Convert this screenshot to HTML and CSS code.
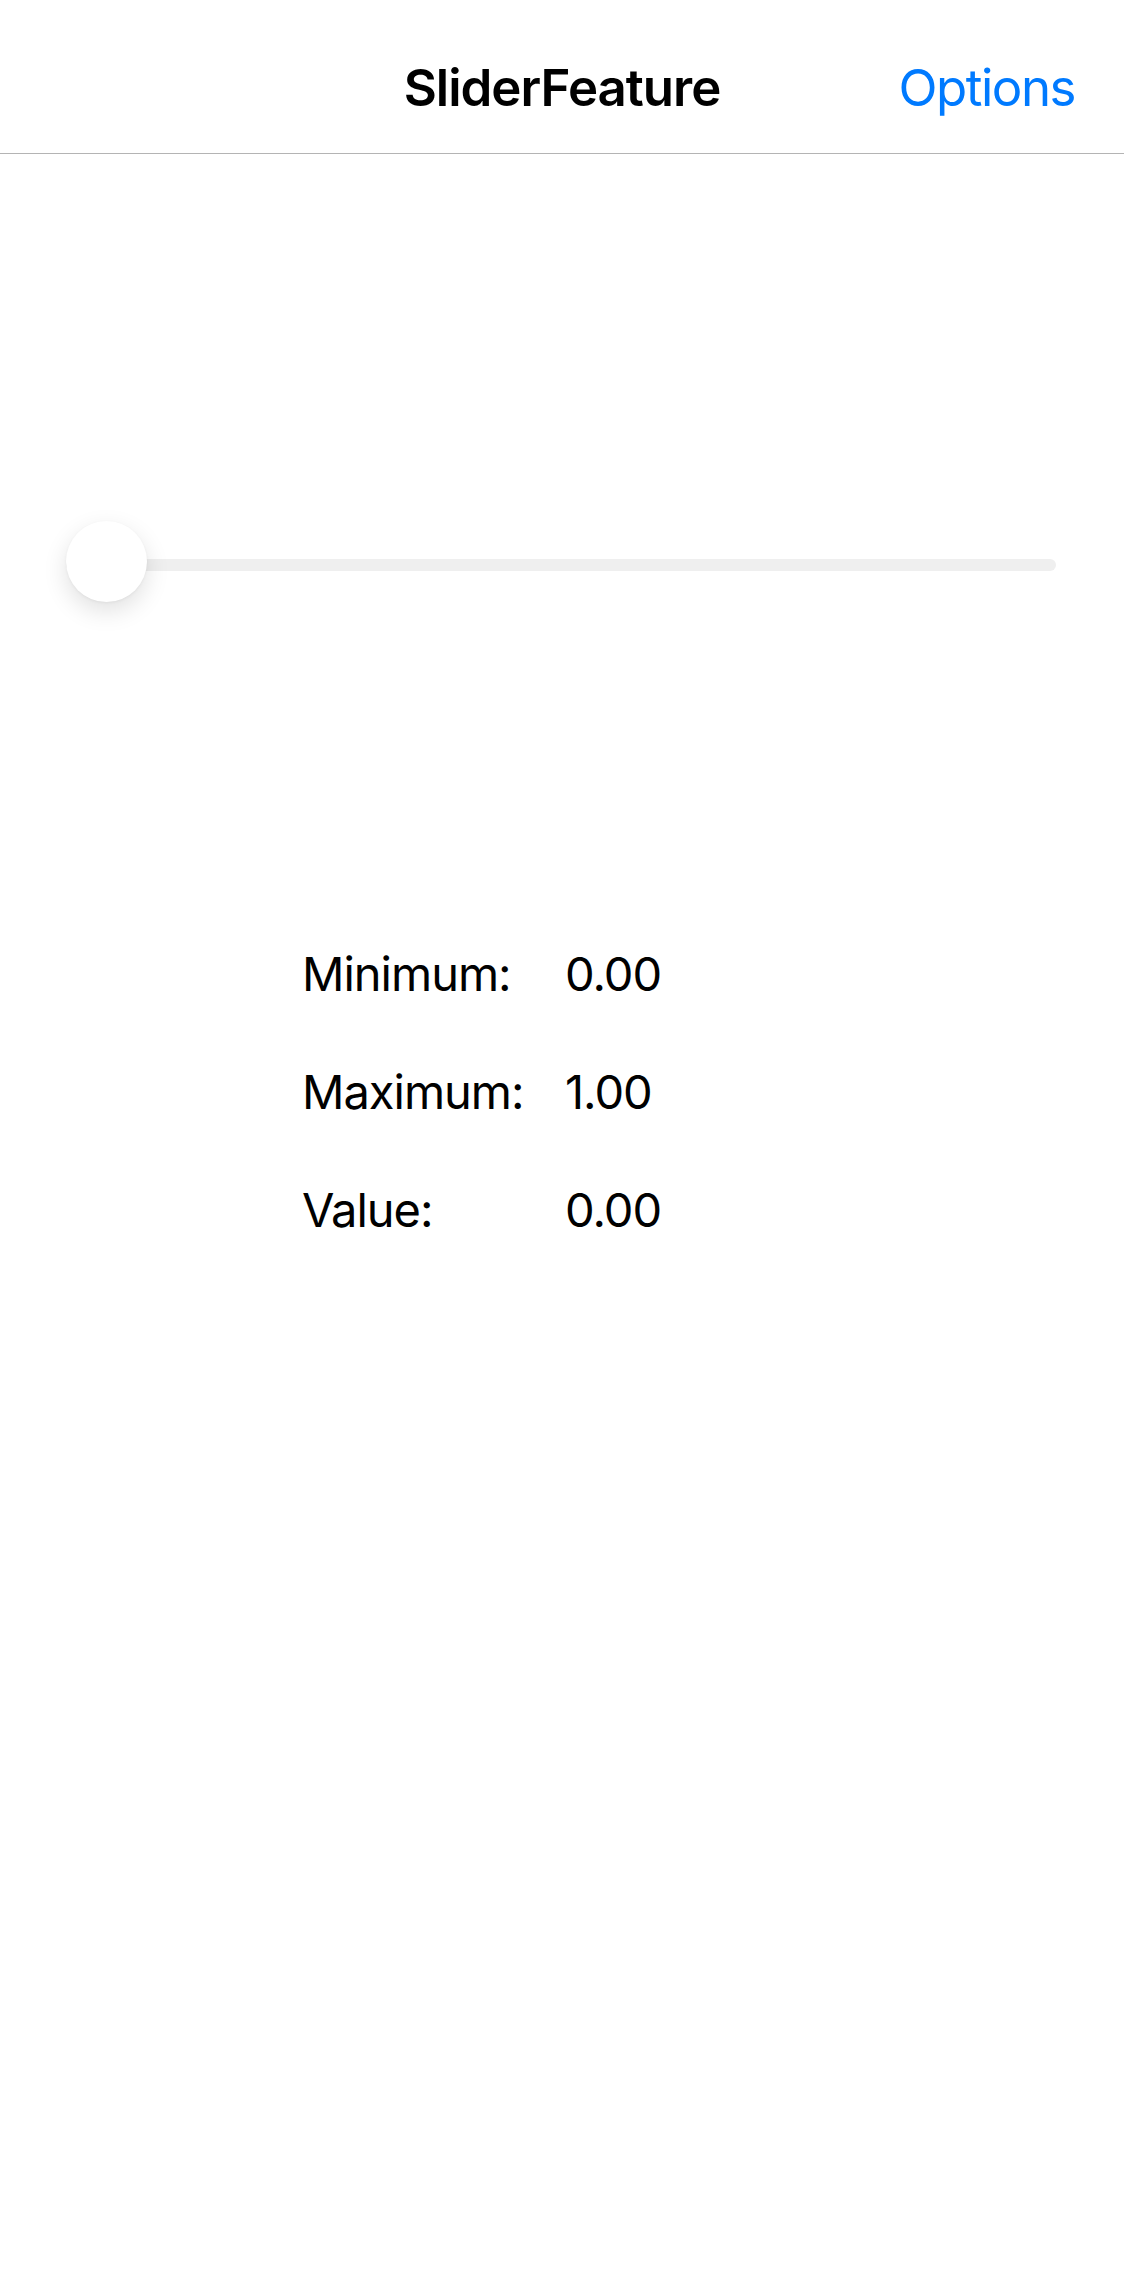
FILE: index.html
```html
<!DOCTYPE html>
<html lang="en">
<head>
<meta charset="utf-8">
<title>SliderFeature</title>
<link rel="stylesheet" href="styles.css">
</head>
<body>
<header class="navbar">
  <div class="nav-side"></div>
  <h1 class="nav-title">SliderFeature</h1>
  <div class="nav-side nav-right"><button class="nav-button">Options</button></div>
</header>
<main class="content">
  <section class="slider">
    <div class="slider-track"></div>
    <div class="slider-thumb"></div>
  </section>
  <dl class="stats">
    <dt>Minimum:</dt><dd>0.00</dd>
    <dt>Maximum:</dt><dd>1.00</dd>
    <dt>Value:</dt><dd>0.00</dd>
  </dl>
</main>
</body>
</html>
```
FILE: styles.css
```css
html, body {
  margin: 0;
  padding: 0;
  background: #ffffff;
}
body {
  font-family: Inter, "Liberation Sans", sans-serif;
  color: #000;
  width: 1124px;
  min-height: 2286px;
}
.navbar {
  display: grid;
  grid-template-columns: 1fr auto 1fr;
  align-items: start;
  height: 153px;
  border-bottom: 1px solid #b4b4b4;
  box-sizing: content-box;
}
.nav-title {
  margin: 0;
  padding-top: 57px;
  font-size: 51px;
  line-height: 61px;
  font-weight: 600;
  letter-spacing: -1px;
}
.nav-right {
  display: flex;
  justify-content: flex-end;
  padding-right: 49px;
}
.nav-button {
  margin: 0;
  padding: 57px 0 0;
  border: 0;
  background: none;
  font-family: inherit;
  font-size: 51px;
  line-height: 61px;
  font-weight: 400;
  color: #007aff;
  letter-spacing: -1.5px;
}
.content {
  display: flex;
  flex-direction: column;
}
.slider {
  position: relative;
  margin: 367px 68px 0 66px;
  height: 81px;
  display: flex;
  align-items: center;
}
.slider-track {
  flex: 1;
  height: 12px;
  margin-top: 6px;
  border-radius: 6px;
  background: #efefef;
}
.slider-thumb {
  position: absolute;
  left: 0;
  top: 0;
  width: 81px;
  height: 81px;
  border-radius: 50%;
  background: #fff;
  box-shadow: 0 9px 24px rgba(0, 0, 0, 0.12), 0 1px 3px rgba(0, 0, 0, 0.05);
}
.stats {
  display: grid;
  grid-template-columns: 263px auto;
  row-gap: 60px;
  margin: 343px 0 0 302px;
  font-size: 47px;
  line-height: 58px;
  letter-spacing: -1px;
}
.stats dt, .stats dd {
  margin: 0;
}
```
